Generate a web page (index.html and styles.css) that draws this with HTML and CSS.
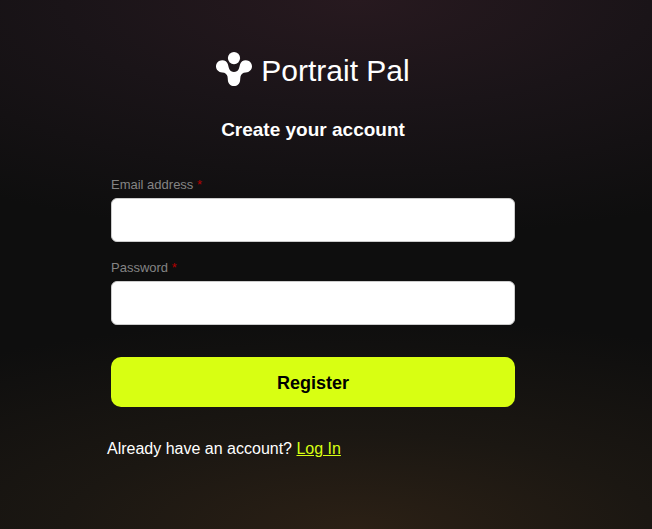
FILE: index.html
```
<!DOCTYPE html>
<html lang="en">
<head>
    <meta charset="UTF-8">
    <meta name="viewport" content="width=device-width, initial-scale=1.0">
    <title>Portrait Pal</title>
    <link rel="stylesheet" href="styles.css">
</head>
<body>

<main class="container">
    <header class="logo">
        <svg class="logo-icon" width="36" height="34" viewBox="0 0 36 34" fill="#fff" aria-hidden="true">
            <circle cx="18" cy="6.1" r="6.1"/>
            <path d="M6.2 8.2C9 8.2 11.2 9.8 12 12.4C12.5 14.4 12.7 15.8 13.4 17.2C14.3 19 15.9 19.9 18 19.9C20.1 19.9 21.7 19 22.6 17.2C23.3 15.8 23.5 14.4 24 12.4C24.8 9.8 27 8.2 29.8 8.2C33.3 8.2 36 11 36 14.3C36 17.7 33.3 20.4 29.8 20.5C26.8 20.6 25 22.4 24.5 24.6C24.2 26 24.3 27 24.1 28.4C23.7 31.8 21.3 34 18 34C14.7 34 12.3 31.8 11.9 28.4C11.7 27 11.8 26 11.5 24.6C11 22.4 9.2 20.6 6.2 20.5C2.7 20.4 0 17.7 0 14.3C0 11 2.7 8.2 6.2 8.2Z"/>
        </svg>
        <span class="logo-text">Portrait Pal</span>
    </header>

    <h1>Create your account</h1>

    <form class="register-form">
        <div class="field">
            <label for="email">Email address <span class="required">*</span></label>
            <input type="email" id="email" name="email" required>
        </div>
        <div class="field">
            <label for="password">Password <span class="required">*</span></label>
            <input type="password" id="password" name="password" required>
        </div>
        <button type="submit">Register</button>
    </form>

    <p class="login">Already have an account? <a href="#">Log In</a></p>
</main>

</body>
</html>
```
FILE: styles.css
```
* {
    box-sizing: border-box;
}
body {
    font-family: "Helvetica Neue", Helvetica, "Liberation Sans", Arial, sans-serif;
    margin: 0;
    padding: 48px 26px 48px 0;
    min-height: 100vh;
    color: white;
    background-color: #0e0e0e;
    background-image:
        radial-gradient(ellipse 100% 45% at 55% 0, #27191f, #1a1418 45%, transparent),
        radial-gradient(ellipse 100% 40% at 55% 100%, #2b2015, #1b1712 45%, transparent);
}
.container {
    width: 100%;
    max-width: 412px;
    margin: 0 auto;
}
.logo {
    display: flex;
    justify-content: center;
    align-items: center;
    gap: 9px;
}
.logo-text {
    padding-top: 4px;
    font-size: 30px;
    line-height: 38px;
}
h1 {
    margin: 27px 0 32px;
    font-size: 19px;
    line-height: 26px;
    text-align: center;
}
.register-form {
    padding: 0 4px;
}
.field {
    margin-bottom: 16px;
}
label {
    display: block;
    margin-bottom: 3px;
    font-size: 13px;
    line-height: 20px;
    color: #848484;
}
.required {
    color: #b30000;
}
input {
    display: block;
    width: 100%;
    height: 44px;
    padding: 8px 12px;
    border: 1px solid #ccc;
    border-radius: 6px;
    background: white;
    font: inherit;
}
button {
    display: block;
    width: 100%;
    height: 50px;
    margin-top: 32px;
    padding: 2px 0 0;
    border: none;
    border-radius: 10px;
    background-color: #d8ff12;
    color: black;
    font-family: inherit;
    font-size: 18px;
    font-weight: bold;
    cursor: pointer;
}
.login {
    margin: 32px 0 0;
    font-size: 16px;
    line-height: 20px;
}
.login a {
    color: #d8ff12;
}
```
